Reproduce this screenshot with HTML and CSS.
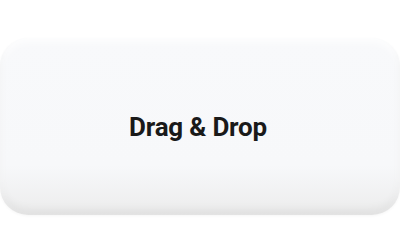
FILE: index.html
```html
<!DOCTYPE html>
<html lang="en">
<head>
  <meta charset="UTF-8" />
  <meta name="viewport" content="width=device-width, initial-scale=1.0"/>
  <title>Drag & Drop</title>
  <link rel="stylesheet" href="styles.css">
</head>
<body>
  <div class="stage">
    <div class="card">
      <div class="label">Drag &amp; Drop</div>
    </div>
  </div>
</body>
</html>
```

FILE: styles.css
```css
body {
  margin: 0;
  background: #fff;
  font-family: Roboto, 'Liberation Sans', sans-serif;
}

.stage {
  height: 250px;
  padding-top: 38px;
  box-sizing: border-box;
}

.card {
  height: 177px;
  border-radius: 28px;
  background: linear-gradient(180deg, #f8f9fb 0%, #f7f8fa 72%, #ececec 100%);
  box-shadow:
    inset 0 -6px 8px rgba(0, 0, 0, 0.05),
    inset 0 4px 8px rgba(255, 255, 255, 0.8),
    0 1px 3px rgba(0, 0, 0, 0.04);
  display: flex;
  align-items: center;
  justify-content: center;
}

.label {
  font-size: 26px;
  font-weight: 700;
  color: #1a1a1a;
  letter-spacing: -0.2px;
  margin-left: -4px;
}
```
